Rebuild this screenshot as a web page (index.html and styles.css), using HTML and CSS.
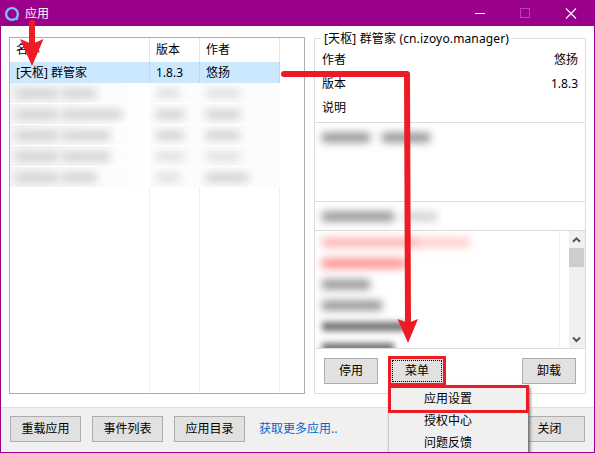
FILE: index.html
```html
<!DOCTYPE html>
<html lang="zh-CN">
<head>
<meta charset="utf-8">
<title>应用</title>
<link rel="stylesheet" href="styles.css">
</head>
<body>
<div class="window">
  <header class="titlebar">
    <svg class="logo" width="16" height="16" viewBox="0 0 16 16"><circle cx="8" cy="8" r="5.900" fill="none" stroke="#72c5f4" stroke-width="2.400"/><path d="M11.500 12L13.700 13.600" stroke="#72c5f4" stroke-width="2.200"/><path d="M10.600 10.800L12 12.100" stroke="#9b008b" stroke-width=".7"/></svg>
    <span class="title">应用</span>
    <svg class="controls" width="138" height="25" viewBox="0 0 138 25"><path d="M19 12.500H29" stroke="#fff"/><rect x="64.500" y="7.500" width="9" height="9" fill="none" stroke="#b843ae"/><path d="M110 7.500L120 17.500M120 7.500L110 17.500" stroke="#fff" stroke-width="1.100"/></svg>
  </header>
  <main class="content">
    <section class="list">
      <div class="row head"><span>名称</span><span>版本</span><span>作者</span></div>
      <div class="row selected"><span>[天枢] 群管家</span><span>1.8.3</span><span>悠扬</span></div>
      <div class="row masked"><span><i class="smear w42"></i><i class="smear w34"></i></span><span><i class="smear w24 pale"></i></span><span><i class="smear w34 pale"></i></span></div>
      <div class="row masked"><span><i class="smear w42"></i><i class="smear w60"></i></span><span><i class="smear w28"></i></span><span><i class="smear w34"></i></span></div>
      <div class="row masked"><span><i class="smear w42"></i><i class="smear w48"></i></span><span><i class="smear w28"></i></span><span><i class="smear w34"></i></span></div>
      <div class="row masked"><span><i class="smear w42"></i><i class="smear w48"></i></span><span><i class="smear w28 pale"></i></span><span><i class="smear w34 pale"></i></span></div>
      <div class="row masked"><span><i class="smear w42"></i><i class="smear w34"></i></span><span><i class="smear w24 pale"></i></span><span><i class="smear w42"></i></span></div>
      <div class="row rest"><span></span><span></span><span></span></div>
    </section>
    <section class="details">
      <h2 class="legend">[天枢] 群管家 (cn.izoyo.manager)</h2>
      <div class="facts">
        <div><span>作者</span><span>悠扬</span></div>
        <div><span>版本</span><span>1.8.3</span></div>
        <div><span>说明</span></div>
      </div>
      <div class="description"><i class="smear deep w48"></i><i class="smear deep w48"></i></div>
      <div class="permission"><i class="smear deep w72"></i><i class="smear w34"></i></div>
      <div class="log">
        <div class="lines">
          <p><i class="smear pink w100"></i><i class="smear pink pale w48"></i></p>
          <p><i class="smear red w84"></i></p>
          <p><i class="smear deep w48"></i></p>
          <p><i class="smear deep w60"></i></p>
          <p><i class="smear dark w84"></i></p>
          <p><i class="smear dark w72"></i></p>
        </div>
        <div class="scrollbar">
          <svg width="15" height="17" viewBox="0 0 15 17"><path d="M4 10.800L7.500 7.300L11 10.800" fill="none" stroke="#555" stroke-width="2"/></svg>
          <div class="thumb"></div>
          <svg width="15" height="17" viewBox="0 0 15 17"><path d="M4 6.500L7.500 10L11 6.500" fill="none" stroke="#555" stroke-width="2"/></svg>
        </div>
      </div>
      <div class="actions">
        <button>停用</button>
        <div class="menu-anchor"><button class="focused">菜单</button>
          <div class="menu"><div class="item current">应用设置</div><div class="item">授权中心</div><div class="item">问题反馈</div></div>
        </div>
        <button class="uninstall">卸载</button>
      </div>
    </section>
  </main>
  <footer class="footer">
    <button>重载应用</button><button>事件列表</button><button>应用目录</button>
    <a>获取更多应用..</a>
    <button class="close">关闭</button>
  </footer>
  <svg class="arrows" width="595" height="453" viewBox="0 0 595 453">
    <g fill="none" stroke="#ed1c24" stroke-width="6" stroke-linecap="round" stroke-linejoin="round"><path d="M32 23V48"/><path d="M284 74H407L408 325"/></g>
    <path d="M32 66L20 39L32 44L43.500 39Z" fill="#ed1c24"/><path d="M408 343L397.500 319L408 323L418 319Z" fill="#ed1c24"/>
  </svg>
</div>
</body>
</html>
```
FILE: styles.css
```css
* { box-sizing: border-box; }
body { margin: 0; overflow: hidden; font: 12px/16px "Noto Sans", "Noto Sans CJK SC", sans-serif; color: #000; }
.window { position: relative; width: 595px; height: 453px; border: 1px solid #9b008b; background: #fff; display: flex; flex-direction: column; overflow: hidden; }
.titlebar { height: 25px; flex: none; background: #9b008b; color: #fff; display: flex; align-items: center; }
.logo { margin-left: 3px; }
.title { margin-left: 5px; }
.controls { margin-left: auto; }
.content { flex: 1; min-height: 0; display: flex; align-items: flex-start; gap: 9px; padding: 11px 8px 0; }
.list { flex: none; width: 296px; height: 357px; border: 1px solid #acacac; display: flex; flex-direction: column; }
.row { display: grid; grid-template-columns: 140px 50px 80px; width: 270px; height: 21px; flex: none; line-height: 21px; white-space: nowrap; }
.row > span { border-right: 1px solid #e8f0fa; padding-left: 6px; }
.row.head { height: 24px; line-height: 23px; }
.head > span { border-color: #e5e5e5; }
.row.selected { background: #cce8ff; }
.selected > span { border-color: #b8dcf8; }
.row.rest { height: auto; flex: 1; }
.masked > span { display: flex; align-items: center; gap: 4px; overflow: hidden; border-bottom: 1px solid #fff; background: linear-gradient(90deg, #f5f5f5, #fdfdfd 85%, #fff); border-right-color: #fcfdff; }
.masked > span + span { background: #fcfcfc; }
.smear { display: block; flex: none; height: 9px; background: #d0d0d0; filter: blur(4.5px); }
.pale { opacity: .65; }
.deep { background: #8c8c8c; }
.dark { background: #707070; }
.pink { background: #ffb0b0; }
.red { background: #ff8585; }
.w24 { width: 24px; }
.w28 { width: 28px; }
.w34 { width: 34px; }
.w42 { width: 42px; }
.w48 { width: 48px; }
.w60 { width: 60px; }
.w72 { width: 72px; }
.w84 { width: 84px; }
.w100 { width: 100px; }
.details { flex: none; width: 272px; height: 356px; margin-top: 1px; border: 1px solid #dcdcdc; display: flex; flex-direction: column; }
.legend { font: inherit; letter-spacing: .14px; align-self: flex-start; height: 16px; margin: -9px 0 0 6px; padding: 0 2px 0 3px; background: #fff; line-height: 17px; white-space: nowrap; }
.facts { height: 76px; padding: 4px 7px 0; }
.facts > div { display: flex; justify-content: space-between; height: 24px; line-height: 20px; }
.description { height: 79px; border-top: 1px solid #dcdcdc; display: flex; gap: 12px; padding: 10px 7px; }
.permission { height: 29px; border-top: 1px solid #dcdcdc; display: flex; gap: 9px; align-items: center; padding-left: 7px; }
.log { height: 119px; border-top: 1px solid #dcdcdc; border-bottom: 1px solid #dcdcdc; display: flex; justify-content: space-between; }
.lines { width: 245px; border-right: 1px solid #edf3fa; overflow: hidden; padding-top: 1px; }
.lines p { display: flex; align-items: center; height: 21px; margin: 0; padding-left: 7px; }
.lines .dark { filter: blur(3px); }
.scrollbar { width: 16px; background: #f0f0f0; display: flex; flex-direction: column; }
.scrollbar svg { flex: none; }
.thumb { width: 15px; height: 19px; background: #cdcdcd; margin-bottom: auto; }
button { width: 54px; height: 26px; padding: 0; border: 1px solid #adadad; background: #e1e1e1; font: inherit; color: inherit; line-height: 22px; }
.actions { display: flex; align-items: flex-start; padding: 9px 9px 0; }
.menu-anchor { position: relative; width: 58px; height: 30px; margin: -2px 0 0 10px; border: 3px solid #ed1c24; }
button.focused { display: block; width: 52px; height: 24px; outline: 1px dotted #000; outline-offset: -2px; border-color: #e1e1e1; }
.uninstall { margin-left: auto; }
.menu { position: absolute; z-index: 1; left: -3px; top: 26px; width: 140px; height: 90px; background: #f0f0f0; border-left: 1px solid #ccc; box-shadow: 2px 2px 3px #666; }
.item { height: 22px; line-height: 22px; padding-left: 35px; }
.item.current { width: 141px; height: 28px; margin-left: -1px; padding-left: 33px; border: 3px solid #ed1c24; line-height: 22px; margin-bottom: -3px; }
.footer { height: 45px; flex: none; border-top: 1px solid #dfdfdf; background: #f0f0f0; display: flex; align-items: flex-start; gap: 11px; padding: 8px 9px 0; }
.footer button { width: 71px; }
.footer a { color: #0066cc; margin-left: 3px; line-height: 26px; }
.footer .close { margin-left: auto; }
.arrows { position: absolute; left: -1px; top: -1px; z-index: 2; pointer-events: none; }
```
